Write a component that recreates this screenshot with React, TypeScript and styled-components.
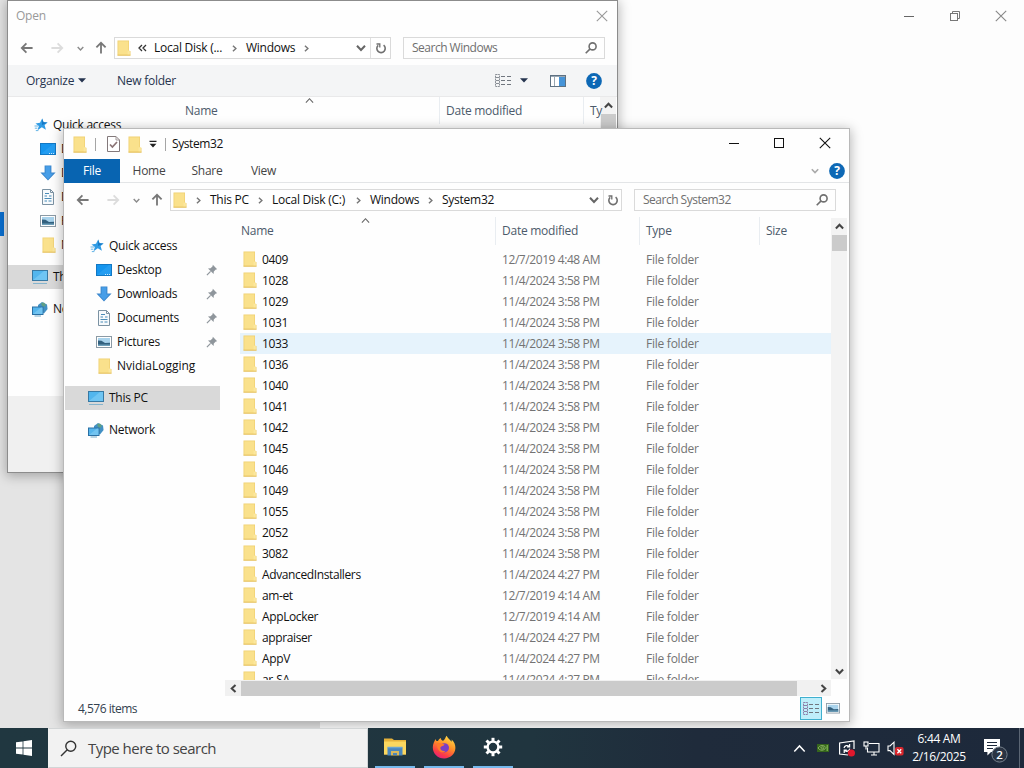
import React from 'react'
import styled, { createGlobalStyle, css } from 'styled-components'

const GlobalStyle = createGlobalStyle`
  * {
    box-sizing: border-box;
  }

  body {
    margin: 0;
    overflow: hidden;
  }

  svg {
    display: block;
    flex: none;
  }
`

const Desktop = styled.div`
  position: relative;
  display: flex;
  flex-direction: column;
  width: 1024px;
  height: 768px;
  overflow: hidden;
  font-family: 'Open Sans', 'Noto Sans', sans-serif;
  font-size: 12px;
  letter-spacing: -0.25px;
  line-height: 16px;
  white-space: nowrap;
  color: #111;
`

/* ---------- settings window behind everything ---------- */

const Backdrop = styled.div`
  display: flex;
  flex: 1;
  background: #fdfdfd;
`

const BackdropNav = styled.div`
  width: 320px;
  padding-top: 212px;
  background: #e4e4e4;
`

const ActiveMark = styled.div`
  width: 4px;
  height: 24px;
  background: #0a6fd0;
`

const BackdropBody = styled.div`
  flex: 1;
  display: flex;
  justify-content: flex-end;
  align-items: flex-start;
  gap: 34px;
  padding: 10px 17px 0 0;
`

/* ---------- shared window parts ---------- */

const Window = styled.div<{ $x: number; $y: number; $w: number; $h: number; $edge: string }>`
  position: absolute;
  left: ${({ $x }) => $x}px;
  top: ${({ $y }) => $y}px;
  width: ${({ $w }) => $w}px;
  height: ${({ $h }) => $h}px;
  display: flex;
  flex-direction: column;
  overflow: hidden;
  background: #fefefe;
  border: 1px solid ${({ $edge }) => $edge};
  box-shadow: 0 2px 11px 1px rgba(0, 0, 0, 0.28);
`

const NavRow = styled.div`
  display: flex;
  align-items: center;
  height: 34px;
  flex: none;
  padding-left: 12px;
`

const NavIcons = styled.div`
  display: flex;
  align-items: center;
  width: 94px;
  flex: none;
`

const Gap = styled.div<{ $w: number }>`
  width: ${({ $w }) => $w}px;
  flex: none;
`

const AddressBox = styled.div<{ $w: number }>`
  display: flex;
  align-items: center;
  width: ${({ $w }) => $w}px;
  height: 22px;
  padding-left: 2px;
  border: 1px solid #dadada;
  background: #fff;
`

const Crumb = styled.span<{ $w: number }>`
  width: ${({ $w }) => $w}px;
`

const CrumbArrow = styled.span`
  display: flex;
  justify-content: center;
  width: 23px;
`

const Spacer = styled.div`
  flex: 1;
`

const RefreshCell = styled.div<{ $w: number }>`
  display: flex;
  align-items: center;
  justify-content: center;
  width: ${({ $w }) => $w}px;
  height: 20px;
  margin-left: 4px;
  border-left: 1px solid #e0e0e0;
`

const SearchBox = styled.div<{ $w: number }>`
  display: flex;
  align-items: center;
  justify-content: space-between;
  width: ${({ $w }) => $w}px;
  height: 22px;
  margin-left: 12px;
  padding: 0 7px 0 8px;
  border: 1px solid #dadada;
  color: #6f6f6f;
  letter-spacing: -0.5px;
`

const HeaderRow = styled.div<{ $h: number; $pad: number }>`
  display: flex;
  flex: none;
  height: ${({ $h }) => $h}px;
  padding-left: ${({ $pad }) => $pad}px;
  color: #4c5a6b;
`

const HeaderCell = styled.div<{ $w: number; $first?: boolean }>`
  position: relative;
  display: flex;
  align-items: center;
  width: ${({ $w }) => $w}px;
  padding-left: ${({ $first }) => ($first ? 1 : 6)}px;
  ${({ $first }) =>
    !$first &&
    css`
      border-left: 1px solid #e9edf1;
    `}
`

const SortMark = styled.div`
  position: absolute;
  left: 121px;
  top: -1px;
`

const Sidebar = styled.div<{ $w: number }>`
  display: flex;
  flex-direction: column;
  width: ${({ $w }) => $w}px;
  flex: none;
`

const SideItem = styled.div<{ $indent: number; $selected?: boolean; $top?: number }>`
  display: flex;
  align-items: center;
  gap: 5px;
  height: 24px;
  flex: none;
  margin-top: ${({ $top }) => $top || 0}px;
  padding: 0 2px 0 ${({ $indent }) => $indent}px;
  background: ${({ $selected }) => ($selected ? '#d9d9d9' : 'transparent')};
`

const SideLabel = styled.span<{ $wide?: boolean }>`
  letter-spacing: ${({ $wide }) => ($wide ? -0.02 : -0.25)}px;
`

/* ---------- open dialog ---------- */

const DialogTitle = styled.div`
  display: flex;
  align-items: center;
  justify-content: space-between;
  height: 30px;
  flex: none;
  padding: 0 9px 0 8px;
  color: #999;
`

const DialogToolbar = styled.div`
  display: flex;
  align-items: center;
  height: 32px;
  flex: none;
  padding: 0 15px 0 18px;
  background: #f4f5f6;
  border-bottom: 1px solid #e9e9ea;
  color: #26344f;
`

const ToolLabel = styled.span<{ $w: number }>`
  width: ${({ $w }) => $w}px;
`

const DialogBody = styled.div`
  display: flex;
  height: 299px;
  flex: none;
`

const DialogSidebar = styled.div`
  padding-top: 16px;
`

const DialogFiles = styled.div`
  display: flex;
  flex: 1;
  overflow: hidden;
`

const DialogFooter = styled.div`
  flex: 1;
  background: #f0f0f0;
`

/* ---------- explorer window ---------- */

const TitleBar = styled.div`
  display: flex;
  align-items: center;
  height: 30px;
  flex: none;
  padding: 0 18px 0 9px;
`

const QuickTools = styled.div`
  display: flex;
  align-items: center;
  width: 99px;
`

const TitleDivider = styled.div<{ $l: number; $r: number }>`
  width: 1px;
  height: 13px;
  margin: 0 ${({ $r }) => $r}px 0 ${({ $l }) => $l}px;
  background: #a5a5a5;
`

const TitleText = styled.span`
  letter-spacing: -0.4px;
`

const WindowButtons = styled.div`
  display: flex;
  align-items: center;
  gap: 34px;
  padding-bottom: 2px;
`

const Ribbon = styled.div`
  display: flex;
  align-items: center;
  height: 24px;
  flex: none;
  padding-right: 4px;
  border-bottom: 1px solid #e3e5e7;
  color: #444;
`

const FileTab = styled.div`
  display: flex;
  align-items: center;
  justify-content: center;
  width: 56px;
  height: 24px;
  background: #0864b1;
  color: #fff;
`

const Tab = styled.div<{ $w: number }>`
  width: ${({ $w }) => $w}px;
  text-align: center;
`

const ExplorerBody = styled.div`
  display: flex;
  height: 479px;
  flex: none;
`

const MainSidebar = styled.div`
  width: 161px;
  padding: 17px 0 0 1px;
  flex: none;
`

const FilePane = styled.div`
  display: flex;
  flex-direction: column;
  width: 606px;
`

const FileList = styled.div`
  height: 431px;
  margin-top: 4px;
  padding: 0 0 0 15px;
  overflow: hidden;
`

const FileRow = styled.div<{ $hover: boolean }>`
  display: flex;
  align-items: center;
  height: 21px;
  padding-left: 3px;
  background: ${({ $hover }) => ($hover ? '#e6f3fc' : 'transparent')};
`

const FileName = styled.span`
  display: flex;
  align-items: center;
  gap: 5px;
  width: 259px;
  letter-spacing: -0.38px;

  svg {
    margin-bottom: 2px;
  }
`

const FileMeta = styled.span<{ $w: number; $tight?: boolean }>`
  width: ${({ $w }) => $w}px;
  color: #737373;
  letter-spacing: ${({ $tight }) => ($tight ? -0.42 : -0.25)}px;
`

const HScroll = styled.div`
  display: flex;
  align-items: center;
  height: 16px;
  background: #f1f1f1;
`

const ScrollEnd = styled.div`
  display: flex;
  align-items: center;
  justify-content: center;
  width: 16px;
  height: 16px;
  flex: none;
`

const HThumb = styled.div`
  width: 556px;
  height: 15px;
  background: #cbcbcb;
`

const VScroll = styled.div<{ $h: number; $top: number }>`
  display: flex;
  flex-direction: column;
  align-items: center;
  width: 16px;
  height: ${({ $h }) => $h}px;
  margin-top: ${({ $top }) => $top}px;
  background: #f3f3f3;
`

const VThumb = styled.div`
  width: 15px;
  height: 16px;
  margin-top: 1px;
  background: #cbcbcb;
`

const StatusBar = styled.div`
  display: flex;
  align-items: center;
  flex: 1;
  padding: 0 5px 0 14px;
  color: #33414f;
  letter-spacing: -0.5px;
`

const ViewButton = styled.div<{ $on?: boolean }>`
  display: flex;
  align-items: center;
  justify-content: center;
  width: 22px;
  height: 23px;
  border: 1px solid ${({ $on }) => ($on ? '#3fb0cf' : 'transparent')};
  background: ${({ $on }) => ($on ? '#bfeefa' : 'transparent')};
`

/* ---------- taskbar ---------- */

const TaskbarRoot = styled.div`
  position: relative;
  display: flex;
  height: 40px;
  flex: none;
  background: linear-gradient(90deg, #203740 0, #20353f 52%, #1f2b3b 68%, #1d293b 100%);
  color: #fff;
`

const StartButton = styled.div`
  display: flex;
  align-items: center;
  justify-content: center;
  width: 48px;
`

const TaskSearch = styled.div`
  display: flex;
  align-items: center;
  gap: 11px;
  width: 320px;
  margin-right: 7px;
  padding-left: 11px;
  border: 1px solid #d2d5d6;
  border-left-color: #f2f2f2;
  background: #f2f2f2;
  color: #444;
  font-size: 15px;
  letter-spacing: -0.53px;
`

const TaskApp = styled.div`
  display: flex;
  align-items: center;
  justify-content: center;
  width: 40px;
  margin-right: 9px;
  border-bottom: 2px solid #76b9ed;
`

const Tray = styled.div`
  display: flex;
  align-items: center;
`

const TrayCell = styled.div`
  display: flex;
  align-items: center;
  justify-content: center;
  width: 24px;
`

const Clock = styled.div`
  display: flex;
  flex-direction: column;
  justify-content: center;
  gap: 2px;
  width: 64px;
  letter-spacing: -0.35px;
  text-align: center;
`

const NoticeCell = styled.div`
  display: flex;
  justify-content: center;
  width: 48px;
  padding-top: 3px;
`

const ShowDesktop = styled.div`
  width: 5px;
  height: 40px;
  border-left: 1px solid #5b6674;
`

/* ---------- icons ---------- */

type Dir = 'up' | 'down' | 'left' | 'right'

const turns: Record<Dir, number> = { down: 0, left: 90, up: 180, right: 270 }

const Chevron = ({ dir, size = 8, color = '#666', weight = 1.6 }: { dir: Dir; size?: number; color?: string; weight?: number }) => (
  <svg width={size} height={size} viewBox="0 0 8 8" fill="none" stroke={color} strokeWidth={weight}>
    <path d="M0.8 2.2 L4 5.6 L7.2 2.2" transform={`rotate(${turns[dir]} 4 4)`} />
  </svg>
)

const DoubleChevron = () => (
  <svg width="9" height="8" viewBox="0 0 9 8" fill="none" stroke="#333" strokeWidth="1.3">
    <path d="M4 1 L1 4 L4 7 M8 1 L5 4 L8 7" />
  </svg>
)

const Arrow = ({ dir, color = '#777' }: { dir: Dir; color?: string }) => (
  <svg width="14" height="14" viewBox="0 0 14 14" fill="none" stroke={color} strokeWidth="1.8">
    <path d="M7 1.4 V12 M2.4 7.6 L7 12.2 L11.6 7.6" transform={`rotate(${turns[dir]} 7 7)`} />
  </svg>
)

const Refresh = () => (
  <svg width="12" height="13" viewBox="0 0 12 13" fill="none" stroke="#707070" strokeWidth="1.6">
    <path d="M8.6 3.1 A4.2 4.2 0 1 1 3.2 3.3" />
    <path d="M1.5 2 H4.8 V5.6" strokeWidth="1.3" />
  </svg>
)

const Magnifier = ({ size = 12, color = '#707070', weight = 1.6 }: { size?: number; color?: string; weight?: number }) => (
  <svg width={size} height={size} viewBox="0 0 12 12" fill="none" stroke={color} strokeWidth={weight}>
    <circle cx="7.6" cy="4.4" r="3.5" />
    <path d="M5.1 6.9 L0.7 11.3" />
  </svg>
)

const Folder = ({ w = 14, h = 16 }: { w?: number; h?: number }) => (
  <svg width={w} height={h} viewBox="0 0 14 16" preserveAspectRatio="none">
    <path d="M0.5 0.5 H12 V11 H13.5 V15.5 H0.5 Z" fill="#efd071" />
    <path d="M1.3 1.3 H11.3 V14.8 H1.3 Z" fill="#fae18c" />
    <path d="M10.6 10.6 H12.9 V14.9 H10.6 Z" fill="#fbe79e" />
    <path d="M0.5 15.2 H13.5" stroke="#e3bc55" strokeWidth="0.8" />
  </svg>
)

const Star = () => (
  <svg width="14" height="14" viewBox="0 0 14 14">
    <path d="M8.2 0.6 L9.5 4.3 L13.6 4.4 L10.6 7 L11.9 11.8 L7.8 9.3 L3.6 12.2 L4.8 8 L1.5 5.4 L6 4.8 Z" fill="#2f9be4" />
    <path d="M0.5 8 H4 M0.8 10.2 H3.4 M1.8 12.6 H4.4" stroke="#65b4e6" strokeWidth="1" />
    <path d="M8.2 0.6 L9.5 4.3 L13.6 4.4 L8 7 Z" fill="#1678c4" />
  </svg>
)

const DesktopIcon = () => (
  <svg width="16" height="14" viewBox="0 0 16 14">
    <rect x="0.5" y="1.5" width="15" height="11" fill="#1595ee" stroke="#1278c4" />
    <path d="M1 12 L13 2 H15 V12 Z" fill="#2ea3f3" opacity="0.6" />
    <path d="M9 11.5 H14.5" stroke="#c9e8fc" strokeDasharray="1 1" />
  </svg>
)

const DownloadIcon = () => (
  <svg width="16" height="16" viewBox="0 0 16 16">
    <path d="M4.6 0.5 H11.4 V7.4 H15.6 L8 15.6 L0.4 7.4 H4.6 Z" fill="#3a86cc" />
    <path d="M5.6 1.3 H10.4 V8.4 H13.3 L8 14.2 L2.7 8.4 H5.6 Z" fill="#479ee8" />
  </svg>
)

const DocumentIcon = () => (
  <svg width="16" height="16" viewBox="0 0 16 16" fill="none">
    <path d="M2.5 0.5 H10.5 L13.5 3.5 V15.5 H2.5 Z" fill="#f7fafc" stroke="#7b92a3" />
    <path d="M5 4.5 H9 M4.5 7 H7 M9 7 H11.5 M4.5 9.5 H11.5 M4.5 12 H7 M8.5 12 H11.5" stroke="#4a8cb8" strokeWidth="1.2" />
    <path d="M10.5 0.5 V3.5 H13.5" stroke="#7b92a3" />
  </svg>
)

const PictureIcon = ({ w = 16 }: { w?: number }) => (
  <svg width={w} height={(w * 12) / 16} viewBox="0 0 16 12">
    <rect x="0.5" y="0.5" width="15" height="11" fill="#fff" stroke="#8b9aa5" />
    <rect x="2" y="2" width="12" height="8" fill="#a9d3ec" />
    <path d="M2 4.5 L5.5 4.8 L9 7 L14 6.8 V10 H2 Z" fill="#33617f" />
    <path d="M2 8.5 H14 V10 H2 Z" fill="#6ea0bb" />
  </svg>
)

const ComputerIcon = () => (
  <svg width="16" height="16" viewBox="0 0 16 16">
    <rect x="0.5" y="1.5" width="15" height="10" fill="#52b6ee" stroke="#3879a3" />
    <path d="M1 11 L12 2 H15 V11 Z" fill="#83cff6" opacity="0.6" />
    <path d="M1 14.5 H15" stroke="#86b4cd" />
  </svg>
)

const NetworkIcon = () => (
  <svg width="16" height="16" viewBox="0 0 16 16">
    <path d="M6 4 L10 1 L15 3.5 L15.6 8 L12 12.5 L6 8 Z" fill="#4290c4" />
    <path d="M9 2 L12 1.5 L14 4 L12 6 L10 5 Z" fill="#5f9f86" />
    <rect x="0.5" y="6" width="10.5" height="7.5" fill="#55b5ec" stroke="#2a70a4" />
    <path d="M1 13 L9 6.5 H10.5 V13 Z" fill="#85cff5" opacity="0.6" />
    <path d="M2.5 15 H9" stroke="#77abc8" />
  </svg>
)

const Pin = () => (
  <svg width="12" height="12" viewBox="0 0 12 12">
    <path d="M6.8 0.8 L11.2 5.2 L9.8 5.6 L7.8 7.6 L7.6 10 L2 4.6 L4.6 4.2 L6.6 2.2 Z" fill="#8f969c" />
    <path d="M4.6 7.4 L0.9 11.1" stroke="#8f969c" strokeWidth="1.2" />
  </svg>
)

const HelpIcon = () => (
  <svg width="16" height="16" viewBox="0 0 16 16">
    <circle cx="8" cy="8" r="7.9" fill="#0d68b5" />
    <text x="8" y="12.3" textAnchor="middle" fontFamily="Open Sans" fontWeight="700" fontSize="12" fill="#fff">
      ?
    </text>
  </svg>
)

const Cross = ({ color = '#111', size = 12, weight = 1.1 }: { color?: string; size?: number; weight?: number }) => (
  <svg width={size} height={size} viewBox="0 0 12 12" stroke={color} strokeWidth={weight}>
    <path d="M0.8 0.8 L11.2 11.2 M11.2 0.8 L0.8 11.2" />
  </svg>
)

const Minimize = ({ color = '#111' }: { color?: string }) => (
  <svg width="12" height="12" viewBox="0 0 12 12" stroke={color}>
    <path d="M1 6.5 H11" />
  </svg>
)

const Maximize = () => (
  <svg width="11" height="12" viewBox="0 0 11 12" fill="none" stroke="#111">
    <rect x="0.5" y="1.5" width="9" height="9" />
  </svg>
)

const Restore = () => (
  <svg width="12" height="12" viewBox="0 0 12 12" fill="none" stroke="#777">
    <rect x="1.5" y="3.5" width="7" height="7" />
    <path d="M3.5 3.5 V1.5 H10.5 V8.5 H8.5" />
  </svg>
)

const Caret = ({ color = '#26344f' }: { color?: string }) => (
  <svg width="8" height="5" viewBox="0 0 8 5">
    <path d="M0 0.3 H8 L4 4.6 Z" fill={color} />
  </svg>
)

const ListViewIcon = ({ color = '#8a8f96' }: { color?: string }) => (
  <svg width="16" height="14" viewBox="0 0 16 14" fill="none" stroke={color}>
    <rect x="0.5" y="0.5" width="4" height="12" strokeDasharray="2 0.6" />
    <path d="M1 3.5 H4 M1 6.5 H4 M1 9.5 H4" />
    <path d="M6 2.5 H16 M6 6.5 H16 M6 10.5 H16" stroke="#70767e" strokeDasharray="4 2" />
  </svg>
)

const PreviewIcon = () => (
  <svg width="16" height="12" viewBox="0 0 16 12">
    <rect x="0.5" y="0.5" width="15" height="11" fill="#fff" stroke="#5e7182" />
    <rect x="9" y="1" width="6" height="10" fill="#4694d8" />
    <path d="M1 1.5 H15 M4.5 1 V11" stroke="#9aa7b2" />
  </svg>
)

const PropertiesIcon = () => (
  <svg width="13" height="16" viewBox="0 0 13 16" fill="none">
    <path d="M0.5 0.5 H9 L12.5 4 V15.5 H0.5 Z" fill="#fff" stroke="#83797b" />
    <path d="M9 0.5 V4 H12.5" stroke="#a39a9b" />
    <path d="M3 8.5 L5.4 11 L10 6" stroke="#8b7475" strokeWidth="1.7" />
  </svg>
)

const CustomizeIcon = () => (
  <svg width="8" height="8" viewBox="0 0 8 8" fill="#222">
    <path d="M0.5 0.8 H7.5 V2 H0.5 Z M0.6 3.8 H7.4 L4 7.4 Z" />
  </svg>
)

const WindowsLogo = () => (
  <svg width="16" height="16" viewBox="0 0 16 16" fill="#fff">
    <path d="M0 2.3 L6.6 1.4 V7.6 H0 Z M7.4 1.3 L16 0.1 V7.6 H7.4 Z M0 8.4 H6.6 V14.6 L0 13.7 Z M7.4 8.4 H16 V15.9 L7.4 14.7 Z" />
  </svg>
)

const TaskExplorerIcon = () => (
  <svg width="22" height="20" viewBox="0 0 22 20">
    <path d="M0 1.5 H8 L10 3 H22 V17.5 H0 Z" fill="#e6b23a" />
    <path d="M0 4.5 H22 V17.5 H0 Z" fill="#fbd75f" />
    <path d="M3.5 18.5 V10.5 H18.5 V18.5 H15 V14 H7 V18.5 Z" fill="#4a86bd" />
    <path d="M7 18.5 V14 H15 V18.5 Z" fill="#d9b85c" />
    <path d="M9 17 H13" stroke="#4a86bd" strokeWidth="2" />
    <path d="M3.5 10.5 H18.5" stroke="#6aa5d2" strokeWidth="1.5" />
  </svg>
)

const FirefoxIcon = () => (
  <svg width="24" height="24" viewBox="0 0 24 24">
    <defs>
      <linearGradient id="fxBody" x1="0.8" y1="0" x2="0.3" y2="1">
        <stop offset="0" stopColor="#ffe14a" />
        <stop offset="0.45" stopColor="#ff9027" />
        <stop offset="0.8" stopColor="#fb3b47" />
        <stop offset="1" stopColor="#e6207c" />
      </linearGradient>
    </defs>
    <path
      d="M3.6 4 C4 6 4.8 6.3 6 6 C6.6 4.6 7.5 3.8 8.8 3 C8.8 4.6 9.6 5.4 11.2 5.8 C13.4 4.4 13.2 2.4 14.6 0.8 C15.8 3.6 18.2 4.4 19.4 6.8 C19.8 6 19.8 5.2 19.6 4.4 C22 6.6 23.6 9.6 23.4 13 C23.2 19 18.2 23.4 12.2 23.4 C5.8 23.4 0.8 18.6 0.8 12.4 C0.8 9 2.4 6.4 3.6 4 Z"
      fill="url(#fxBody)"
    />
    <circle cx="12.4" cy="12.8" r="4.6" fill="#7a3fc4" />
    <path d="M5 8.5 C8 7.4 10 8.6 12.6 9.4 C11.6 11.4 9.4 10.6 8.4 12.4 C8 15 10.4 16.6 13.6 15.8 C10.4 19.6 4.6 16.2 5 8.5 Z" fill="#ff7a2b" />
  </svg>
)

const teeth = [0, 45, 90, 135, 180, 225, 270, 315]

const GearIcon = () => (
  <svg width="20" height="20" viewBox="0 0 20 20" fill="none" stroke="#fff">
    <circle cx="10" cy="10" r="5.4" strokeWidth="2.4" />
    {teeth.map((a) => (
      <path key={a} d="M10 0.8 V4" strokeWidth="3" transform={`rotate(${a} 10 10)`} />
    ))}
  </svg>
)

const NvidiaIcon = () => (
  <svg width="12" height="8" viewBox="0 0 12 8" fill="none">
    <rect width="12" height="8" fill="#35651c" />
    <path d="M1 4 C3 0.8 7 0.8 9 3.6 C7 7 3 7 1 4 Z M3.6 4 C4.6 2.4 6.2 2.6 7.2 3.8 C6 5.4 4.6 5.2 3.6 4" stroke="#a8cf7c" strokeWidth="0.7" />
    <path d="M9.5 1 H11 V7 H9.5 Z" fill="#74a94a" />
  </svg>
)

const SyncIcon = () => (
  <svg width="18" height="17" viewBox="0 0 18 17" fill="none" stroke="#fff" strokeWidth="1.2">
    <path d="M16 9 V1 L1.6 3 V14 L10 15" />
    <path d="M6 8 C6.6 5.4 9.4 4.8 11.4 6.4 M11.6 4 V6.8 H9 M11.8 8.6 C11 11.4 8.2 12 6.4 10.4 M6.2 13 V10.2 H8.8" />
    <circle cx="13.4" cy="13" r="3.6" fill="#e0182d" stroke="none" />
  </svg>
)

const EthernetIcon = () => (
  <svg width="17" height="15" viewBox="0 0 17 15" fill="none" stroke="#fff" strokeWidth="1.1">
    <path d="M6 2.5 H16 V11 H4.5 V6.5 M8 14 H14 M11 11 V14" />
    <rect x="1" y="1" width="4" height="4" />
    <path d="M3 5 V8.5" />
  </svg>
)

const SpeakerIcon = () => (
  <svg width="17" height="15" viewBox="0 0 17 15" fill="none">
    <path d="M1 5 H3 L7 1.2 V13.4 L3 9.6 H1 Z" stroke="#fff" strokeWidth="1.1" />
    <rect x="8" y="6" width="8.6" height="8.4" rx="2" fill="#d8262c" />
    <path d="M10.4 8.2 L14.2 12.2 M14.2 8.2 L10.4 12.2" stroke="#fff" strokeWidth="1.3" />
  </svg>
)

const NoticeIcon = () => (
  <svg width="26" height="26" viewBox="0 0 26 26">
    <path d="M2 2 H18 V15 H9 L5.4 18.6 V15 H2 Z" fill="#fff" />
    <path d="M5 5.5 H15 M5 8.5 H15 M5 11.5 H11" stroke="#1d293b" />
    <circle cx="17.5" cy="17.5" r="7.6" fill="#2a3443" stroke="#75808c" />
    <text x="17.5" y="21.6" textAnchor="middle" fontFamily="Open Sans" fontSize="11.5" fontWeight="600" fill="#fff">
      2
    </text>
  </svg>
)

/* ---------- composed parts ---------- */

const places = [
  { label: 'Desktop', icon: <DesktopIcon />, pinned: true },
  { label: 'Downloads', icon: <DownloadIcon />, pinned: true },
  { label: 'Documents', icon: <DocumentIcon />, pinned: true },
  { label: 'Pictures', icon: <PictureIcon />, pinned: true },
  { label: 'NvidiaLogging', icon: <Folder />, pinned: false },
]

const Places = ({ width, indent }: { width: number; indent: number }) => (
  <Sidebar $w={width}>
    <SideItem $indent={indent + 2}>
      <Star />
      <SideLabel>Quick access</SideLabel>
    </SideItem>
    {places.map(({ label, icon, pinned }) => (
      <SideItem key={label} $indent={pinned ? indent + 8 : indent + 10}>
        {icon}
        <SideLabel $wide={!pinned}>{label}</SideLabel>
        <Spacer />
        {pinned && <Pin />}
      </SideItem>
    ))}
    <SideItem $indent={indent} $selected $top={8}>
      <ComputerIcon />
      <SideLabel>This PC</SideLabel>
    </SideItem>
    <SideItem $indent={indent} $top={8}>
      <NetworkIcon />
      <SideLabel>Network</SideLabel>
    </SideItem>
  </Sidebar>
)

const History = () => (
  <NavIcons>
    <Arrow dir="left" />
    <Gap $w={16} />
    <Arrow dir="right" color="#dcdcdc" />
    <Gap $w={13} />
    <Chevron dir="down" size={7} color="#8a8a8a" />
    <Gap $w={10} />
    <Arrow dir="up" />
  </NavIcons>
)

const OpenDialog = () => (
  <Window $x={7} $y={0} $w={611} $h={473} $edge="#8c8c8c">
    <DialogTitle>
      <span>Open</span>
      <Cross color="#999" />
    </DialogTitle>
    <NavRow>
      <History />
      <AddressBox $w={277}>
        <Folder />
        <CrumbArrow>
          <DoubleChevron />
        </CrumbArrow>
        <Crumb $w={69}>Local Disk (...</Crumb>
        <CrumbArrow>
          <Chevron dir="right" size={7} color="#777" />
        </CrumbArrow>
        <Crumb $w={49}>Windows</Crumb>
        <CrumbArrow>
          <Chevron dir="right" size={7} color="#777" />
        </CrumbArrow>
        <Spacer />
        <Chevron dir="down" size={10} />
        <RefreshCell $w={20}>
          <Refresh />
        </RefreshCell>
      </AddressBox>
      <SearchBox $w={202}>
        <span>Search Windows</span>
        <Magnifier />
      </SearchBox>
    </NavRow>
    <DialogToolbar>
      <ToolLabel $w={52}>Organize</ToolLabel>
      <Caret />
      <Gap $w={31} />
      <span>New folder</span>
      <Spacer />
      <ListViewIcon />
      <Gap $w={9} />
      <Caret />
      <Gap $w={22} />
      <PreviewIcon />
      <Gap $w={20} />
      <HelpIcon />
    </DialogToolbar>
    <DialogBody>
      <DialogSidebar>
        <Places width={163} indent={24} />
      </DialogSidebar>
      <DialogFiles>
        <HeaderRow $h={27} $pad={13}>
          <HeaderCell $w={255} $first>
            Name
            <SortMark>
              <Chevron dir="up" size={9} weight={1} />
            </SortMark>
          </HeaderCell>
          <HeaderCell $w={144}>Date modified</HeaderCell>
          <HeaderCell $w={17}>Ty</HeaderCell>
        </HeaderRow>
        <VScroll $h={299} $top={0}>
          <ScrollEnd>
            <Chevron dir="up" size={9} weight={1.8} color="#444" />
          </ScrollEnd>
          <VThumb />
        </VScroll>
      </DialogFiles>
    </DialogBody>
    <DialogFooter />
  </Window>
)

const files: [string, string][] = [
  ['0409', '12/7/2019 4:48 AM'],
  ['1028', '11/4/2024 3:58 PM'],
  ['1029', '11/4/2024 3:58 PM'],
  ['1031', '11/4/2024 3:58 PM'],
  ['1033', '11/4/2024 3:58 PM'],
  ['1036', '11/4/2024 3:58 PM'],
  ['1040', '11/4/2024 3:58 PM'],
  ['1041', '11/4/2024 3:58 PM'],
  ['1042', '11/4/2024 3:58 PM'],
  ['1045', '11/4/2024 3:58 PM'],
  ['1046', '11/4/2024 3:58 PM'],
  ['1049', '11/4/2024 3:58 PM'],
  ['1055', '11/4/2024 3:58 PM'],
  ['2052', '11/4/2024 3:58 PM'],
  ['3082', '11/4/2024 3:58 PM'],
  ['AdvancedInstallers', '11/4/2024 4:27 PM'],
  ['am-et', '12/7/2019 4:14 AM'],
  ['AppLocker', '12/7/2019 4:14 AM'],
  ['appraiser', '11/4/2024 4:27 PM'],
  ['AppV', '11/4/2024 4:27 PM'],
  ['ar-SA', '11/4/2024 4:27 PM'],
]

const crumbs: [string, number][] = [
  ['This PC', 39],
  ['Local Disk (C:)', 75],
  ['Windows', 49],
  ['System32', 51],
]

const Explorer = () => (
  <Window $x={63} $y={128} $w={787} $h={594} $edge="#b9b9b9">
    <TitleBar>
      <QuickTools>
        <Folder h={17} />
        <TitleDivider $l={8} $r={11} />
        <PropertiesIcon />
        <Gap $w={8} />
        <Folder h={17} />
        <Gap $w={7} />
        <CustomizeIcon />
        <TitleDivider $l={8} $r={0} />
      </QuickTools>
      <TitleText>System32</TitleText>
      <Spacer />
      <WindowButtons>
        <Minimize />
        <Maximize />
        <Cross />
      </WindowButtons>
    </TitleBar>
    <Ribbon>
      <FileTab>File</FileTab>
      <Tab $w={58}>Home</Tab>
      <Tab $w={58}>Share</Tab>
      <Tab $w={55}>View</Tab>
      <Spacer />
      <Chevron dir="down" size={8} color="#aaa" />
      <Gap $w={10} />
      <HelpIcon />
    </Ribbon>
    <NavRow>
      <History />
      <AddressBox $w={452}>
        <Folder />
        {crumbs.map(([label, w]) => (
          <React.Fragment key={label}>
            <CrumbArrow>
              <Chevron dir="right" size={7} color="#777" />
            </CrumbArrow>
            <Crumb $w={w}>{label}</Crumb>
          </React.Fragment>
        ))}
        <Spacer />
        <Chevron dir="down" size={10} />
        <RefreshCell $w={18}>
          <Refresh />
        </RefreshCell>
      </AddressBox>
      <SearchBox $w={202}>
        <span>Search System32</span>
        <Magnifier />
      </SearchBox>
    </NavRow>
    <ExplorerBody>
      <MainSidebar>
        <Places width={155} indent={23} />
      </MainSidebar>
      <FilePane>
        <HeaderRow $h={28} $pad={15}>
          <HeaderCell $w={255} $first>
            Name
            <SortMark>
              <Chevron dir="up" size={9} weight={1} />
            </SortMark>
          </HeaderCell>
          <HeaderCell $w={144}>Date modified</HeaderCell>
          <HeaderCell $w={120}>Type</HeaderCell>
          <HeaderCell $w={72}>Size</HeaderCell>
        </HeaderRow>
        <FileList>
          {files.map(([name, date]) => (
            <FileRow key={name} $hover={name === '1033'}>
              <FileName>
                <Folder />
                {name}
              </FileName>
              <FileMeta $w={144} $tight>
                {date}
              </FileMeta>
              <FileMeta $w={120}>File folder</FileMeta>
            </FileRow>
          ))}
        </FileList>
        <HScroll>
          <ScrollEnd>
            <Chevron dir="left" size={9} weight={1.8} color="#444" />
          </ScrollEnd>
          <HThumb />
          <Spacer />
          <ScrollEnd>
            <Chevron dir="right" size={9} weight={1.8} color="#444" />
          </ScrollEnd>
        </HScroll>
      </FilePane>
      <VScroll $h={461} $top={1}>
        <ScrollEnd>
          <Chevron dir="up" size={9} weight={1.8} color="#444" />
        </ScrollEnd>
        <VThumb />
        <Spacer />
        <ScrollEnd>
          <Chevron dir="down" size={9} weight={1.8} color="#444" />
        </ScrollEnd>
      </VScroll>
    </ExplorerBody>
    <StatusBar>
      <span>4,576 items</span>
      <Spacer />
      <ViewButton $on>
        <ListViewIcon color="#8d7fa8" />
      </ViewButton>
      <ViewButton>
        <PictureIcon w={14} />
      </ViewButton>
    </StatusBar>
  </Window>
)

const Taskbar = () => (
  <TaskbarRoot>
    <StartButton>
      <WindowsLogo />
    </StartButton>
    <TaskSearch>
      <Magnifier size={17} color="#333" weight={1} />
      <span>Type here to search</span>
    </TaskSearch>
    <TaskApp>
      <TaskExplorerIcon />
    </TaskApp>
    <TaskApp>
      <FirefoxIcon />
    </TaskApp>
    <TaskApp>
      <GearIcon />
    </TaskApp>
    <Spacer />
    <Tray>
      <TrayCell>
        <Chevron dir="up" size={13} color="#fff" weight={0.9} />
      </TrayCell>
      <TrayCell>
        <NvidiaIcon />
      </TrayCell>
      <TrayCell>
        <SyncIcon />
      </TrayCell>
      <TrayCell>
        <EthernetIcon />
      </TrayCell>
      <TrayCell>
        <SpeakerIcon />
      </TrayCell>
      <Clock>
        <span>6:44 AM</span>
        <span>2/16/2025</span>
      </Clock>
      <NoticeCell>
        <NoticeIcon />
      </NoticeCell>
      <ShowDesktop />
    </Tray>
  </TaskbarRoot>
)

export default function App() {
  return (
    <Desktop>
      <GlobalStyle />
      <Backdrop>
        <BackdropNav>
          <ActiveMark />
        </BackdropNav>
        <BackdropBody>
          <Minimize color="#666" />
          <Restore />
          <Cross color="#888" />
        </BackdropBody>
      </Backdrop>
      <OpenDialog />
      <Explorer />
      <Taskbar />
    </Desktop>
  )
}
